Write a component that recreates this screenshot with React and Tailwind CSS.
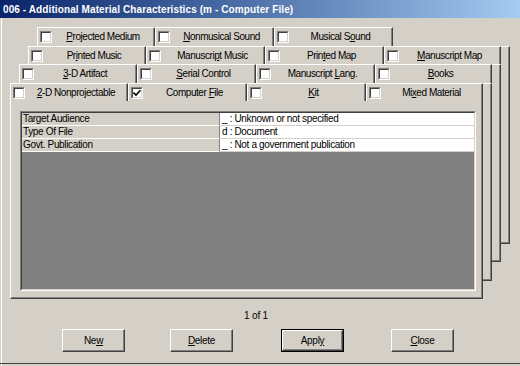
import React from "react";

const rows = [
  {
    cls: "flex h-[19px] ml-[37px]",
    tabs: [
      { w: "w-[118px]", l: ["", "P", "rojected Medium"] },
      { w: "w-[119px]", l: ["", "N", "onmusical Sound"] },
      { w: "w-[119px]", l: ["Musical S", "o", "und"] },
    ],
  },
  {
    cls: "flex h-[18px] ml-[28px]",
    tabs: [
      { w: "w-[118px]", l: ["Pr", "i", "nted Music"] },
      { w: "w-[119px]", l: ["Manuscri", "p", "t Music"] },
      { w: "w-[119px]", l: ["Prin", "t", "ed Map"] },
      { w: "w-[117px]", l: ["", "M", "anuscript Map"] },
    ],
  },
  {
    cls: "flex h-[19px] ml-[19px]",
    tabs: [
      { w: "w-[118px]", l: ["", "3", "-D Artifact"] },
      { w: "w-[119px]", l: ["", "S", "erial Control"] },
      { w: "w-[119px]", l: ["Manuscript ", "L", "ang."] },
      { w: "w-[117px]", l: ["", "B", "ooks"] },
    ],
  },
  {
    cls: "flex h-[18px] ml-[10px]",
    tabs: [
      { w: "w-[118px]", l: ["", "2", "-D Nonprojectable"] },
      { w: "w-[119px]", l: ["Computer ", "F", "ile"], checked: true },
      { w: "w-[119px]", l: ["", "K", "it"] },
      { w: "w-[117px]", l: ["Mi", "x", "ed Material"] },
    ],
  },
];

function Check({ checked }) {
  return (
    <span className="w-[12px] h-[12px] shrink-0 border border-t-[#808080] border-l-[#808080] border-r-white border-b-white">
      <span className="w-full h-full flex items-center justify-center bg-white border border-t-[#404040] border-l-[#404040] border-r-[#d4d0c8] border-b-[#d4d0c8]">
        {checked && (
          <svg width="8" height="8" viewBox="0 0 8 8">
            <path d="M0.5 3.5 L3 6 L7.5 1.2" stroke="#000" strokeWidth="1.6" fill="none" />
          </svg>
        )}
      </span>
    </span>
  );
}

function Label({ l }) {
  return (
    <span>
      {l[0]}
      <u className="underline-offset-1">{l[1]}</u>
      {l[2]}
    </span>
  );
}

function Tab({ t }) {
  return (
    <div
      className={
        t.w +
        " h-full flex items-center pl-[2px] bg-[#d4d0c8] border-t border-l border-r border-t-white border-l-white border-r-[#404040] shadow-[inset_-1px_0_0_#808080]"
      }
    >
      <Check checked={t.checked} />
      <div className="flex-1 text-center text-[10px] tracking-[-0.45px] leading-none whitespace-nowrap">
        <Label l={t.l} />
      </div>
    </div>
  );
}

const grid = [
  ["Target Audience", "_ : Unknown or not specified"],
  ["Type Of File", "d : Document"],
  ["Govt. Publication", "_ : Not a government publication"],
];

function Button({ children, def, cls }) {
  const inner = (
    <div className="w-full h-full flex items-center justify-center border border-t-white border-l-white border-r-[#404040] border-b-[#404040] shadow-[inset_-1px_-1px_0_#808080] text-[10px] tracking-[-0.3px]">
      {children}
    </div>
  );
  return def ? (
    <div className={cls + " h-[23px] border border-black"}>{inner}</div>
  ) : (
    <div className={cls + " h-[23px]"}>{inner}</div>
  );
}

export default function App() {
  return (
    <div className="w-[520px] h-[366px] bg-[#d4d0c8] relative overflow-hidden font-['Liberation_Sans',Arial,sans-serif] text-black shadow-[inset_1px_0_0_#d4d0c8,inset_2px_0_0_#ffffff]">
      <div className="h-[18px] bg-linear-to-r from-[#0a246a] to-[#a6caf0] flex items-center pl-[3px] text-white font-bold text-[10px] tracking-[0.1px] whitespace-nowrap">
        006 - Additional Material Characteristics (m - Computer File)
      </div>
      <div className="relative mt-[9px]">
        <div className="absolute left-[37px] top-[19px] w-[473px] h-[198px] bg-[#d4d0c8] border-t border-t-white border-r border-r-[#404040] border-b border-b-[#404040] shadow-[inset_-1px_-1px_0_#808080]" />
        <div className="absolute left-[28px] top-[37px] w-[473px] h-[198px] bg-[#d4d0c8] border-t border-t-white border-r border-r-[#404040] border-b border-b-[#404040] shadow-[inset_-1px_-1px_0_#808080]" />
        <div className="absolute left-[19px] top-[56px] w-[473px] h-[198px] bg-[#d4d0c8] border-t border-t-white border-r border-r-[#404040] border-b border-b-[#404040] shadow-[inset_-1px_-1px_0_#808080]" />
        {rows.map((r, i) => (
          <div key={i} className={r.cls + " relative"}>
            {r.tabs.map((t, j) => (
              <Tab key={j} t={t} />
            ))}
          </div>
        ))}
        <div className="relative ml-[10px] w-[473px] h-[198px] bg-[#d4d0c8] border-l border-l-white border-r border-r-[#404040] border-b border-b-[#404040] shadow-[inset_-1px_-1px_0_#808080] pt-[10px] pl-[9px]">
          <div className="w-[456px] h-[180px] border border-t-[#808080] border-l-[#808080] border-r-white border-b-white">
            <div className="w-full h-full flex flex-col border border-t-[#404040] border-l-[#404040] border-r-[#d4d0c8] border-b-[#d4d0c8] bg-[#808080]">
              {grid.map((g, i) => (
                <div key={i} className="flex h-[13px] text-[10px] tracking-[-0.35px] leading-[12px] whitespace-nowrap">
                  <div className="w-[198px] pl-[1px] bg-[#d4d0c8] border-r border-r-[#808080] border-b border-b-[#ffffff]">
                    {g[0]}
                  </div>
                  <div className="flex-1 pl-[2px] bg-white border-b border-b-[#d4d0c8]">{g[1]}</div>
                </div>
              ))}
            </div>
          </div>
        </div>
      </div>
      <div className="w-[512px] mt-[10px] h-[14px] leading-[14px] text-center text-[10px] tracking-[-0.2px]">1 of 1</div>
      <div className="flex mt-[6px]">
        <Button cls="ml-[62px] w-[63px]">
          <span>
            Ne<u>w</u>
          </span>
        </Button>
        <Button cls="ml-[45px] w-[63px]">
          <span>
            <u>D</u>elete
          </span>
        </Button>
        <Button def cls="ml-[48px] w-[63px]">
          <span>
            Appl<u>y</u>
          </span>
        </Button>
        <Button cls="ml-[47px] w-[63px]">
          <span>
            <u>C</u>lose
          </span>
        </Button>
      </div>
      <div className="absolute left-0 right-0 top-[363px] h-[1px] bg-[#404040]" />
    </div>
  );
}
